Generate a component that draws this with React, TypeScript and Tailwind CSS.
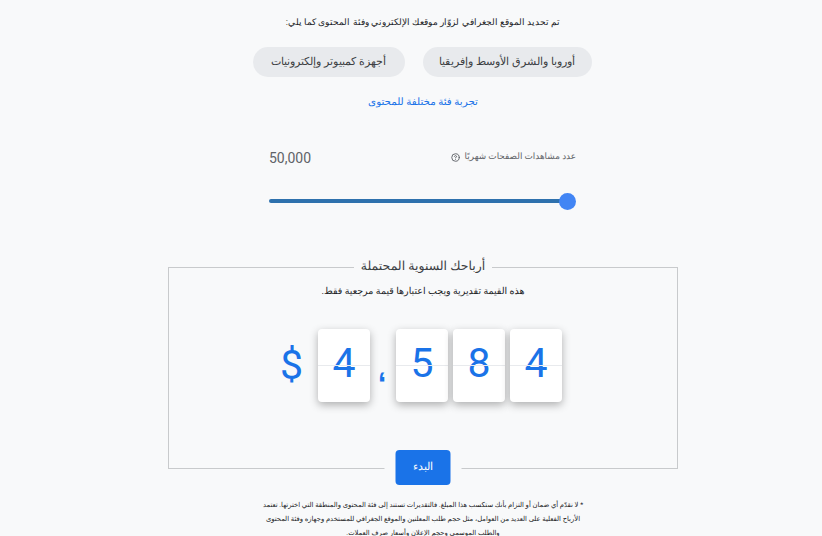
import React from 'react';
import { CircleHelp } from 'lucide-react';

const digitCard = "relative flex h-[73px] w-[52px] items-center justify-center rounded-sm bg-white shadow-[0_3px_8px_rgba(0,0,0,0.3)]";

function Digit({ value }: { value: string }) {
  return (
    <div className={digitCard}>
      <span className="relative top-[-2px]">{value}</span>
      <div className="absolute left-0 right-0 top-[36px] h-px bg-[#e8eaed]" />
    </div>
  );
}

export default function App() {
  return (
    <div dir="rtl" className="h-[536px] overflow-hidden bg-[#f8f9fa] pl-[24px] font-['Roboto','Liberation_Sans',sans-serif] text-[#202124]">
      <p className="pt-[15px] text-center text-[9px] leading-[14px]">
        تم تحديد الموقع الجغرافي لزوّار موقعك الإلكتروني وفئة المحتوى كما يلي:
      </p>

      <div className="mt-[18px] flex justify-center gap-[18px] pr-[2px]">
        <span className="flex h-[30px] w-[169px] items-center justify-center rounded-full bg-[#e8eaed] text-[11px] text-[#3c4043]">
          أوروبا والشرق الأوسط وإفريقيا
        </span>
        <span className="flex h-[30px] w-[152px] items-center justify-center rounded-full bg-[#e8eaed] text-[11px] text-[#3c4043]">
          أجهزة كمبيوتر وإلكترونيات
        </span>
      </div>

      <p className="mt-[18px] text-center text-[10.3px] leading-[14px] text-[#1a73e8] [text-rendering:geometricPrecision]">
        تجربة فئة مختلفة للمحتوى
      </p>

      {/* Slider */}
      <div className="mx-auto mt-[39px] w-[308px] pr-[1px]">
        <div className="flex items-center justify-between">
          <span className="mb-[2px] flex items-center gap-[5px] text-[8.85px] text-[#5f6368] [text-rendering:geometricPrecision]">
            عدد مشاهدات الصفحات شهريًا
            <CircleHelp size={9} strokeWidth={2.5} />
          </span>
          <span dir="ltr" className="text-[14px] text-[#5f6368]">50,000</span>
        </div>
        <div dir="ltr" className="relative mt-[24px] h-[17px]">
          <div className="absolute left-0 right-[4px] top-[6px] h-[4px] rounded-full bg-[#2e71ad]" />
          <div className="absolute right-0 top-0 h-[17px] w-[17px] rounded-full bg-[#4285f4]" />
        </div>
      </div>

      {/* Earnings box */}
      <fieldset className="relative mx-auto mt-[49px] h-[210px] w-[510px] border border-[#c8cacc] text-center">
        <legend className="mx-auto px-[7px] text-[12.5px] leading-[16px] text-[#3c4043] [text-rendering:geometricPrecision]">أرباحك السنوية المحتملة</legend>
        <p className="mt-[10px] text-[9.5px] leading-[14px] [text-rendering:geometricPrecision]">
          هذه القيمة تقديرية ويجب اعتبارها قيمة مرجعية فقط.
        </p>
        <div dir="ltr" className="mt-[30px] flex justify-center pr-[4px] text-[41px] leading-none text-[#1a73e8]">
          <span className="flex w-[35px] items-center justify-start">$</span>
          <div className="ml-[3px]"><Digit value="4" /></div>
          <span className="flex h-[73px] w-[26px] items-center justify-center pr-[2px] pt-[42px] font-['Liberation_Sans',sans-serif] text-[30px] font-bold">
            <span className="inline-block rotate-180">,</span>
          </span>
          <Digit value="5" />
          <div className="ml-[5px]"><Digit value="8" /></div>
          <div className="ml-[5px]"><Digit value="4" /></div>
        </div>
        <div className="absolute bottom-[-17px] left-1/2 -translate-x-1/2 bg-[#f8f9fa] px-[11px]">
          <button className="flex h-[35px] w-[55px] items-center justify-center rounded-sm bg-[#1a73e8] text-[11px] font-medium text-white">
            البدء
          </button>
        </div>
      </fieldset>

      <p className="mx-auto mt-[29px] w-[330px] text-center text-[6.8px] leading-[14px] [text-rendering:geometricPrecision]">
        * لا نقدّم أي ضمان أو التزام بأنك ستكسب هذا المبلغ. فالتقديرات تستند إلى فئة المحتوى والمنطقة التي اخترتها. تعتمد الأرباح الفعلية على العديد من العوامل، مثل حجم طلب المعلنين والموقع الجغرافي للمستخدم وجهازه وفئة المحتوى والطلب الموسمي وحجم الإعلان وأسعار صرف العملات.
      </p>
    </div>
  );
}
